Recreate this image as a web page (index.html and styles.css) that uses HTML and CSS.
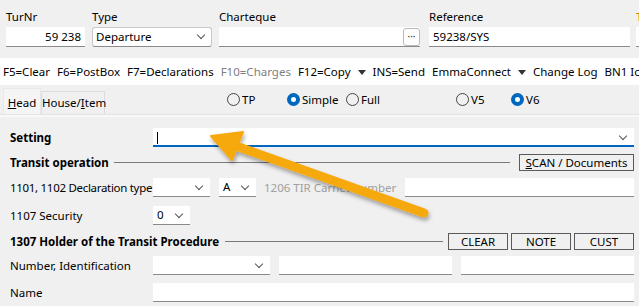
FILE: index.html
```html
<!DOCTYPE html>
<html lang="en">
<head>
    <meta charset="UTF-8">
    <title>Transit</title>
    <link rel="stylesheet" href="styles.css">
</head>
<body>
    <div class="header">
        <div class="field f-turnr">
            <label>TurNr</label>
            <div class="input num">59 238</div>
        </div>
        <div class="field f-type">
            <label>Type</label>
            <div class="select boxed">Departure<span class="chev"></span></div>
        </div>
        <div class="field f-charteque">
            <label>Charteque</label>
            <div class="input with-btn"><span class="dots">&middot;&middot;&middot;</span></div>
        </div>
        <div class="field f-ref">
            <label>Reference</label>
            <div class="input">59238/SYS</div>
        </div>
        <div class="field f-more">
            <label class="orange">T</label>
            <div class="input"></div>
        </div>
    </div>

    <div class="toolbar">
        <span>F5=Clear</span>
        <span>F6=PostBox</span>
        <span>F7=Declarations</span>
        <span class="dim">F10=Charges</span>
        <span>F12=Copy <i class="tri"></i></span>
        <span>INS=Send</span>
        <span>EmmaConnect <i class="tri"></i></span>
        <span>Change Log</span>
        <span>BN1 Ic</span>
    </div>

    <div class="tabbar">
        <div class="tab active"><u>H</u>ead</div>
        <div class="tab tab-house">House/<u>I</u>tem</div>
        <div class="radios">
            <span class="radio r-tp"><i></i>TP</span>
            <span class="radio on r-simple"><i></i>Simple</span>
            <span class="radio r-full"><i></i>Full</span>
            <span class="radio r-v5"><i></i>V5</span>
            <span class="radio on r-v6"><i></i>V6</span>
        </div>
    </div>

    <div class="panel">
        <div class="row row-setting">
            <div class="lbl bold">Setting</div>
            <div class="input focus grow"><span class="caret"></span><span class="chev"></span></div>
        </div>
        <div class="row row-section1">
            <div class="bold">Transit operation</div>
            <div class="rule"></div>
            <button class="btn scan"><u>S</u>CAN / Documents</button>
        </div>
        <div class="row row-decl">
            <div class="lbl tight">1101, 1102 Declaration type</div>
            <div class="input select w57"><span class="chev"></span></div>
            <div class="input select w37">A<span class="chev"></span></div>
            <div class="grey tir">1206 TIR Carnet number</div>
            <div class="input grow"></div>
        </div>
        <div class="row row-sec">
            <div class="lbl">1107 Security</div>
            <div class="input select w37">0<span class="chev"></span></div>
        </div>
        <div class="row row-section2">
            <div class="bold">1307 Holder of the Transit Procedure</div>
            <div class="rule"></div>
            <button class="btn small">CLEAR</button>
            <button class="btn small">NOTE</button>
            <button class="btn small">CUST</button>
        </div>
        <div class="row row-num">
            <div class="lbl">Number, Identification</div>
            <div class="input select w117"><span class="chev"></span></div>
            <div class="input w173"></div>
            <div class="input grow"></div>
        </div>
        <div class="row row-name">
            <div class="lbl">Name</div>
            <div class="input grow"></div>
        </div>
    </div>

    <svg class="arrow" width="639" height="306" viewBox="0 0 639 306">
        <defs>
            <filter id="shadow" x="-10%" y="-10%" width="130%" height="140%">
                <feDropShadow dx="1" dy="3" stdDeviation="2" flood-color="#000" flood-opacity="0.35"/>
            </filter>
        </defs>
        <g filter="url(#shadow)" fill="#f6a90e" stroke="#f6a90e">
            <line x1="424" y1="213" x2="236" y2="146" stroke-width="9" stroke-linecap="round"/>
            <polygon points="211,136 243,132 232,160" stroke-width="2" stroke-linejoin="round"/>
        </g>
    </svg>
</body>
</html>
```

FILE: styles.css
```css
body {
    margin: 0;
    width: 639px;
    height: 306px;
    overflow: hidden;
    background: #f0f0f0;
    font-family: "Noto Sans", "Open Sans", sans-serif;
    font-size: 11.5px;
    color: #000;
    position: relative;
    white-space: nowrap;
}

/* header fields */
.header {
    display: flex;
    height: 58px;
    padding-top: 8px;
    box-sizing: border-box;
    overflow: hidden;
}
.field { flex-shrink: 0; }
.field label {
    display: block;
    height: 19px;
    line-height: 17px;
}
.orange { color: #d08a00; }
.f-turnr { margin-left: 6px; width: 79px; }
.f-type { margin-left: 7px; width: 120px; }
.f-charteque { margin-left: 7px; width: 201px; }
.f-ref { margin-left: 9px; width: 201px; }
.f-more { margin-left: 6px; flex: 1; min-width: 0; overflow: hidden; }

.input {
    position: relative;
    height: 20px;
    line-height: 19px;
    background: #fff;
    border-bottom: 1px solid #8a8a8a;
    box-sizing: border-box;
    padding: 0 4px;
    flex-shrink: 0;
}
.input.num { text-align: right; padding-right: 4px; }
.select.boxed {
    position: relative;
    height: 20px;
    line-height: 18px;
    background: #fff;
    border: 1px solid #c8c8c8;
    border-bottom-color: #8a8a8a;
    border-radius: 3px;
    box-sizing: border-box;
    padding: 0 3px;
}
.with-btn .dots {
    position: absolute;
    right: 0;
    top: 1px;
    width: 15px;
    height: 16px;
    border: 1px solid #bbb;
    border-radius: 3px;
    background: #fdfdfd;
    font-size: 10px;
    line-height: 14px;
    text-align: center;
    color: #333;
}
.chev {
    position: absolute;
    right: 7px;
    top: 4px;
    width: 5px;
    height: 5px;
    border-right: 1px solid #555;
    border-bottom: 1px solid #555;
    transform: rotate(45deg);
}

/* toolbar */
.toolbar {
    display: flex;
    gap: 7px;
    height: 27px;
    align-items: center;
    background: #fff;
    padding-left: 3px;
    overflow: hidden;
}
.toolbar span { flex-shrink: 0; }
.toolbar .dim { color: #808080; }
.tri {
    display: inline-block;
    margin-left: 4px;
    border-left: 4px solid transparent;
    border-right: 4px solid transparent;
    border-top: 5px solid #333;
    vertical-align: middle;
}

/* tabs + radios */
.tabbar {
    display: flex;
    align-items: flex-end;
    height: 29px;
    border-bottom: 1px solid #e2e2e2;
    padding-left: 3px;
}
.tab {
    flex-shrink: 0;
    height: 23px;
    line-height: 21px;
    width: 64px;
    text-align: center;
    box-sizing: border-box;
    border: 1px solid #dcdcdc;
    border-bottom: none;
    background: #f0f0f0;
}
.tab.active {
    width: 38px;
    height: 26px;
    line-height: 28px;
    border-color: #e8e8e8;
    background: #f5f5f5;
}
.radios {
    display: flex;
    align-self: center;
    margin-left: 122px;
}
.radio {
    display: flex;
    align-items: center;
    flex-shrink: 0;
}
.radio i {
    width: 13px;
    height: 13px;
    border: 1px solid #444;
    border-radius: 50%;
    margin-right: 2px;
    box-sizing: border-box;
}
.radio.on i {
    border: 4px solid #0067c0;
    background: #fff;
}
.r-tp { width: 60px; }
.r-simple { width: 59px; }
.r-full { width: 110px; }
.r-v5 { width: 55px; }

/* panel */
.panel {
    padding: 11px 5px 0 10px;
    border-top: 2px solid #f8f8f8;
}
.row {
    display: flex;
    align-items: center;
}
.lbl { width: 143px; flex-shrink: 0; }
.lbl.tight { letter-spacing: -0.3px; }
.bold { font-weight: bold; }
.grow { flex: 1; }
.row .input { height: 19px; line-height: 18px; }
.input.focus {
    border-bottom: 2px solid #0067c0;
}
.caret {
    display: inline-block;
    width: 1px;
    height: 12px;
    background: #000;
    vertical-align: middle;
}
.input .chev { right: 8px; top: 5px; }
.row-setting { height: 19px; }
.row-section1 { margin-top: 7px; height: 17px; }
.rule {
    flex: 1;
    height: 1px;
    background: #7a7a7a;
    margin: 0 9px 0 5px;
}
.btn {
    font-family: inherit;
    font-size: 11.5px;
    height: 17px;
    line-height: 14px;
    padding: 0;
    border: 1px solid #5a5a5a;
    background: #f0f0f0;
    color: #000;
    flex-shrink: 0;
}
.scan { width: 115px; }
.row-decl { margin-top: 7px; }
.w57 { width: 57px; }
.w37 { width: 37px; }
.row-decl .w37 { margin-left: 9px; }
.tir { color: #a0a0a0; margin: 0 9px 0 8px; }
.row-sec { margin-top: 9px; }
.row-section2 { margin-top: 8px; height: 17px; }
.row-section2 .rule { margin: 0 5px 0 6px; }
.small { width: 60px; margin-left: 3px; }
.small:first-of-type { margin-left: 0; }
.row-num { margin-top: 6px; }
.w117 { width: 117px; }
.w173 { width: 173px; margin: 0 9px; }
.row-name { margin-top: 8px; }

.arrow {
    position: absolute;
    left: 0;
    top: 0;
    pointer-events: none;
}
```
